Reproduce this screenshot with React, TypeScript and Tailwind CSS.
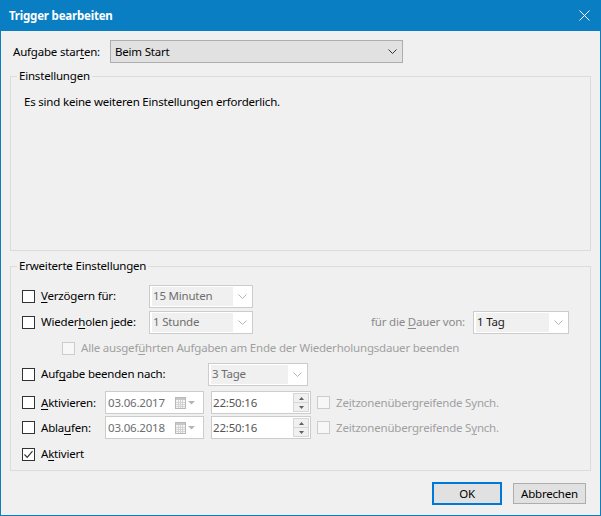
import React from "react";

const FONT = { fontFamily: '"Noto Sans", "Open Sans", sans-serif' };

function U({ children }: { children: React.ReactNode }) {
  return <span className="underline underline-offset-[2px] decoration-[1px]">{children}</span>;
}

function Check({ checked = false, disabled = false }: { checked?: boolean; disabled?: boolean }) {
  return (
    <div
      className={
        "w-[13px] h-[13px] shrink-0 border flex items-center justify-center " +
        (disabled ? "border-[#cccccc] bg-[#f7f7f7]" : "border-[#333333] bg-white")
      }
    >
      {checked && (
        <svg width="11" height="11" viewBox="0 0 11 11">
          <path d="M1.5 5.5 L4.2 8.3 L9.5 2.2" fill="none" stroke="#333333" strokeWidth="1.2" />
        </svg>
      )}
    </div>
  );
}

function Chevron({ color }: { color: string }) {
  return (
    <svg width="9" height="5" viewBox="0 0 9 5">
      <path d="M0.5 0.5 L4.5 4.5 L8.5 0.5" fill="none" stroke={color} strokeWidth="1" />
    </svg>
  );
}

function Combo({ value, w, dark = false }: { value: string; w: string; dark?: boolean }) {
  return (
    <div className={"h-[23px] border border-[#cccccc] bg-white flex items-stretch py-[1px] pl-[2px] shrink-0 " + w}>
      <div
        className={
          "flex-1 bg-[#f0f0f0] flex items-center pl-[1px] leading-none " +
          (dark ? "text-[#1a1a1a]" : "text-[#6d6d6d]")
        }
      >
        {value}
      </div>
      <div className="w-[19px] flex items-center justify-center">
        <Chevron color="#b5b5b5" />
      </div>
    </div>
  );
}

function CalIcon() {
  return (
    <svg width="11" height="12" viewBox="0 0 11 12">
      <rect x="0.5" y="0.5" width="10" height="11" fill="#f6f6f6" stroke="#b8b8b8" />
      <rect x="1" y="1" width="9" height="2" fill="#c8c8c8" />
      <path d="M1 5.5 H10 M1 7.5 H10 M1 9.5 H10 M3.5 3 V11 M5.5 3 V11 M7.5 3 V11" stroke="#d4d4d4" strokeWidth="1" />
    </svg>
  );
}

function DateBox({ value }: { value: string }) {
  return (
    <div className="w-[99px] h-[23px] border border-[#cccccc] bg-white flex items-center shrink-0">
      <span className="pl-[2px] text-[#6d6d6d] flex-1">{value}</span>
      <CalIcon />
      <svg width="8" height="4" viewBox="0 0 8 4" className="ml-[2px] mr-[7px]">
        <path d="M0 0 H7 L3.5 3.5 Z" fill="#b5b5b5" />
      </svg>
    </div>
  );
}

function TimeBox({ value }: { value: string }) {
  return (
    <div className="w-[100px] h-[23px] border border-[#cccccc] bg-white flex items-stretch shrink-0">
      <span className="pl-[1px] text-[#555555] flex-1 flex items-center">{value}</span>
      <div className="w-[16px] flex flex-col py-[1px] mr-[1px]">
        <div className="flex-1 border border-[#d6d6d6] bg-[#f0f0f0] flex items-center justify-center">
          <svg width="5" height="3" viewBox="0 0 5 3">
            <path d="M0 3 H5 L2.5 0 Z" fill="#606060" />
          </svg>
        </div>
        <div className="flex-1 border border-t-0 border-[#d6d6d6] bg-[#f0f0f0] flex items-center justify-center">
          <svg width="5" height="3" viewBox="0 0 5 3">
            <path d="M0 0 H5 L2.5 3 Z" fill="#606060" />
          </svg>
        </div>
      </div>
    </div>
  );
}

export default function App() {
  return (
    <div
      className="w-[601px] h-[516px] bg-[#0a7ec2] px-[1px] pb-[1px] flex flex-col text-[11.5px] tracking-[-0.2px] text-black"
      style={FONT}
    >
      {/* Title bar */}
      <div className="h-[31px] shrink-0 flex items-center pl-[8px] pr-[10px]">
        <span className="text-white font-bold text-[11.5px] flex-1">Trigger bearbeiten</span>
        <svg width="11" height="11" viewBox="0 0 11 11">
          <path d="M0.5 0.5 L10.5 10.5 M10.5 0.5 L0.5 10.5" stroke="white" strokeWidth="1" />
        </svg>
      </div>

      {/* Content */}
      <div className="flex-1 bg-[#f0f0f0] flex flex-col">
        <div className="mt-[9px] pl-[12px] flex items-center h-[23px]">
          <span className="w-[97px]">
            Aufgabe star<U>t</U>en:
          </span>
          <div className="w-[293px] h-[23px] border border-[#adadad] bg-[#e1e1e1] flex items-center pl-[4px] pr-[5px]">
            <span className="flex-1">Beim Start</span>
            <Chevron color="#333333" />
          </div>
        </div>

        {/* Einstellungen */}
        <div className="mt-[13px] mx-[9px] h-[175px] border border-[#dcdcdc] flex flex-col">
          <div className="-mt-[9px] ml-[6px] px-[2px] bg-[#f0f0f0] w-fit leading-[16px]">Einstellungen</div>
          <div className="mt-[10px] ml-[13px] leading-[16px]">Es sind keine weiteren Einstellungen erforderlich.</div>
        </div>

        {/* Erweiterte Einstellungen */}
        <div className="mt-[15px] mx-[9px] h-[205px] border border-[#dcdcdc] flex flex-col pl-[11px]">
          <div className="-mt-[9px] -ml-[5px] px-[2px] bg-[#f0f0f0] w-fit leading-[16px]">Erweiterte Einstellungen</div>

          <div className="mt-[11px] h-[22px] flex items-center">
            <div className="w-[19px]">
              <Check />
            </div>
            <span className="w-[108px]">
              <U>V</U>erzögern für:
            </span>
            <Combo value="15 Minuten" w="w-[104px]" />
          </div>

          <div className="mt-[4px] h-[22px] flex items-center">
            <div className="w-[19px]">
              <Check />
            </div>
            <span className="w-[108px]">
              Wieder<U>h</U>olen jede:
            </span>
            <Combo value="1 Stunde" w="w-[104px]" />
            <span className="flex-1 text-right text-[#8a8a8a] pr-[8px]">
              für die <U>D</U>auer von:
            </span>
            <Combo value="1 Tag" w="w-[96px]" dark />
            <div className="w-[21px]" />
          </div>

          <div className="mt-[4px] h-[22px] flex items-center pl-[40px]">
            <div className="w-[19px]">
              <Check disabled />
            </div>
            <span className="text-[#a0a0a0]">
              Alle ausgef<U>ü</U>hrten Aufgaben am Ende der Wiederholungsdauer beenden
            </span>
          </div>

          <div className="mt-[4px] h-[22px] flex items-center">
            <div className="w-[19px]">
              <Check />
            </div>
            <span className="w-[167px]">
              Auf<U>g</U>abe beenden nach:
            </span>
            <Combo value="3 Tage" w="w-[100px]" />
          </div>

          <div className="mt-[6px] h-[23px] flex items-center">
            <div className="w-[19px]">
              <Check />
            </div>
            <span className="w-[64px]">
              <U>A</U>ktivieren:
            </span>
            <DateBox value="03.06.2017" />
            <div className="w-[7px]" />
            <TimeBox value="22:50:16" />
            <div className="w-[6px]" />
            <div className="w-[19px]">
              <Check disabled />
            </div>
            <span className="text-[#a0a0a0]">
              Ze<U>i</U>tzonenübergreifende Synch.
            </span>
          </div>

          <div className="mt-[2px] h-[23px] flex items-center">
            <div className="w-[19px]">
              <Check />
            </div>
            <span className="w-[64px]">
              Abla<U>u</U>fen:
            </span>
            <DateBox value="03.06.2018" />
            <div className="w-[7px]" />
            <TimeBox value="22:50:16" />
            <div className="w-[6px]" />
            <div className="w-[19px]">
              <Check disabled />
            </div>
            <span className="text-[#a0a0a0]">
              Zeitzonenübergreifende S<U>y</U>nch.
            </span>
          </div>

          <div className="mt-[4px] h-[22px] flex items-center">
            <div className="w-[19px]">
              <Check checked />
            </div>
            <span>
              A<U>k</U>tiviert
            </span>
          </div>
        </div>

        {/* Buttons */}
        <div className="mt-[11px] flex items-center justify-end pr-[14px]">
          <button className="w-[70px] h-[23px] border-2 border-[#0078d7] bg-[#e1e1e1] leading-none">OK</button>
          <button className="ml-[11px] w-[73px] h-[21px] border border-[#adadad] bg-[#e1e1e1] leading-none">
            Abbrechen
          </button>
        </div>
      </div>
    </div>
  );
}
